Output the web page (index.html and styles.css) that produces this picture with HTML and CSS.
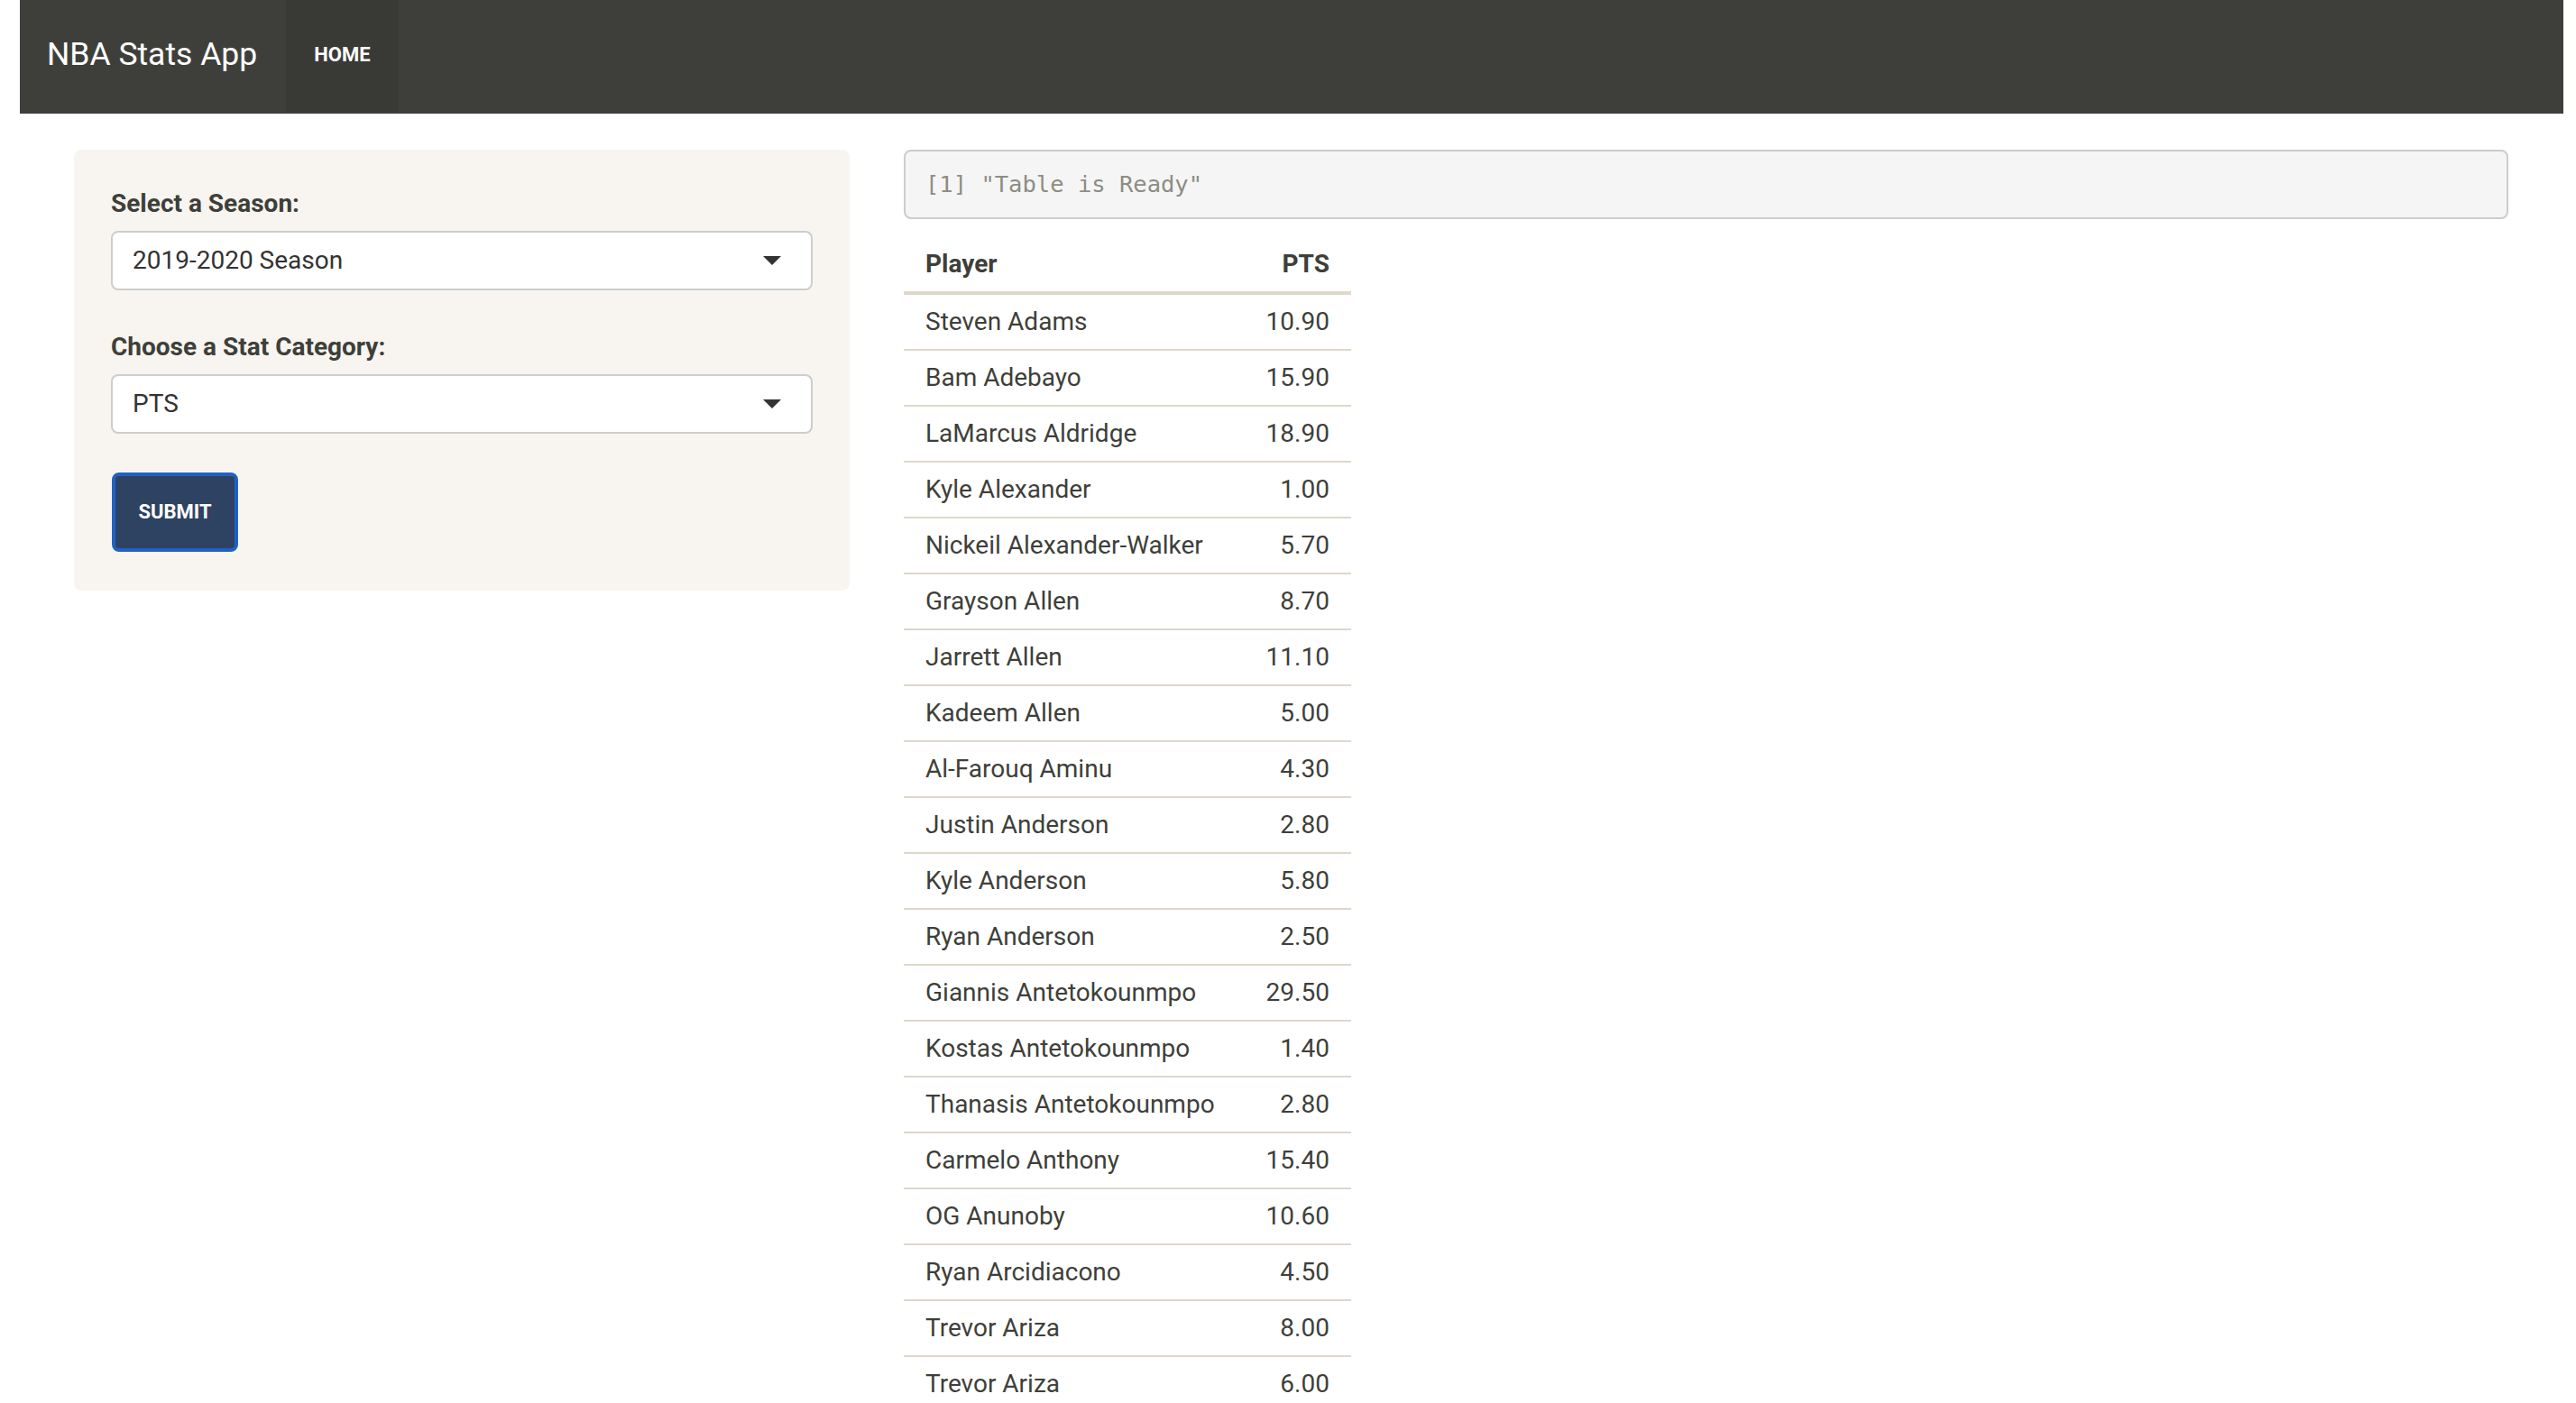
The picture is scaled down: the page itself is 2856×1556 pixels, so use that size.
FILE: index.html
```html
<!DOCTYPE html>
<html lang="en">
<head>
<meta charset="utf-8">
<title>NBA Stats App</title>
<link rel="stylesheet" href="styles.css">
</head>
<body>
<nav class="navbar">
  <span class="brand">NBA Stats App</span>
  <ul class="nav">
    <li class="nav-item active">HOME</li>
  </ul>
</nav>
<div class="container">
  <aside class="well">
    <div class="form-group">
      <label class="control-label">Select a Season:</label>
      <div class="select-box">
        <span class="select-value">2019-2020 Season</span>
        <svg class="caret" width="20" height="10" viewBox="0 0 20 10"><path d="M0 0 L20 0 L10 10 Z" fill="#333"/></svg>
      </div>
    </div>
    <div class="form-group">
      <label class="control-label">Choose a Stat Category:</label>
      <div class="select-box">
        <span class="select-value">PTS</span>
        <svg class="caret" width="20" height="10" viewBox="0 0 20 10"><path d="M0 0 L20 0 L10 10 Z" fill="#333"/></svg>
      </div>
    </div>
    <button class="btn-submit" type="button">SUBMIT</button>
  </aside>
  <main class="main">
    <pre class="output">[1] "Table is Ready"</pre>
    <table class="stats">
      <thead>
        <tr><th>Player</th><th class="num">PTS</th></tr>
      </thead>
      <tbody>
        <tr><td>Steven Adams</td><td class="num">10.90</td></tr>
        <tr><td>Bam Adebayo</td><td class="num">15.90</td></tr>
        <tr><td>LaMarcus Aldridge</td><td class="num">18.90</td></tr>
        <tr><td>Kyle Alexander</td><td class="num">1.00</td></tr>
        <tr><td>Nickeil Alexander-Walker</td><td class="num">5.70</td></tr>
        <tr><td>Grayson Allen</td><td class="num">8.70</td></tr>
        <tr><td>Jarrett Allen</td><td class="num">11.10</td></tr>
        <tr><td>Kadeem Allen</td><td class="num">5.00</td></tr>
        <tr><td>Al-Farouq Aminu</td><td class="num">4.30</td></tr>
        <tr><td>Justin Anderson</td><td class="num">2.80</td></tr>
        <tr><td>Kyle Anderson</td><td class="num">5.80</td></tr>
        <tr><td>Ryan Anderson</td><td class="num">2.50</td></tr>
        <tr><td>Giannis Antetokounmpo</td><td class="num">29.50</td></tr>
        <tr><td>Kostas Antetokounmpo</td><td class="num">1.40</td></tr>
        <tr><td>Thanasis Antetokounmpo</td><td class="num">2.80</td></tr>
        <tr><td>Carmelo Anthony</td><td class="num">15.40</td></tr>
        <tr><td>OG Anunoby</td><td class="num">10.60</td></tr>
        <tr><td>Ryan Arcidiacono</td><td class="num">4.50</td></tr>
        <tr><td>Trevor Ariza</td><td class="num">8.00</td></tr>
        <tr><td>Trevor Ariza</td><td class="num">6.00</td></tr>
      </tbody>
    </table>
  </main>
</div>
</body>
</html>
```

FILE: styles.css
```css
html, body {
  margin: 0;
  height: 100%;
  overflow: hidden;
  background: #ffffff;
}

body {
  padding: 0 14px 0 22px;
  font-family: Roboto, "Liberation Sans", sans-serif;
  font-size: 28px;
  line-height: 40px;
  color: #3e3f3a;
}

.navbar {
  display: flex;
  align-items: flex-start;
  height: 126px;
  background: #3e3f3a;
  margin-bottom: 40px;
}

.brand {
  display: flex;
  align-items: center;
  height: 126px;
  box-sizing: border-box;
  padding: 0 32px 6px 30px;
  font-size: 35.5px;
  color: #ffffff;
}

.nav {
  list-style: none;
  margin: 0;
  padding: 0;
  display: flex;
}

.nav-item {
  display: flex;
  align-items: center;
  height: 124px;
  box-sizing: border-box;
  padding: 0 31px 3px;
  font-size: 22px;
  font-weight: 700;
  color: #ffffff;
}

.nav-item.active {
  background: #393a35;
}

.container {
  display: flex;
  align-items: flex-start;
  gap: 60px;
  padding: 0 61px 0 60px;
}

.well {
  flex: 0 0 860px;
  box-sizing: border-box;
  padding: 40px 41px 42px;
  background: #f8f5f0;
  border-radius: 8px;
}

.form-group {
  margin-bottom: 43px;
}

.control-label {
  display: block;
  font-weight: 700;
  margin-bottom: 10px;
}

.select-box {
  display: flex;
  align-items: center;
  justify-content: space-between;
  height: 66px;
  box-sizing: border-box;
  padding: 0 33px 0 22px;
  border: 2px solid #cdcdcd;
  border-radius: 8px;
  background: #ffffff;
  color: #333333;
}

.caret {
  display: block;
}

.btn-submit {
  display: block;
  margin: 1px;
  width: 140px;
  height: 88px;
  padding: 0;
  border: 4px solid #2161c4;
  border-radius: 8px;
  box-shadow: 0 0 0 1px #ffffff;
  background: #2e4262;
  color: #ffffff;
  font-family: Roboto, "Liberation Sans", sans-serif;
  font-size: 22px;
  font-weight: 700;
  line-height: 40px;
}

.main {
  flex: 1;
  min-width: 0;
}

.output {
  margin: 0 0 20px;
  padding: 19px 22px;
  border: 2px solid #cccccc;
  border-radius: 8px;
  background: #f5f5f5;
  font-family: "DejaVu Sans Mono", "Liberation Mono", monospace;
  font-size: 25.5px;
  line-height: 35px;
  color: #8e8c84;
}

.stats {
  border-collapse: collapse;
  margin-top: 3px;
}

.stats th,
.stats td {
  padding: 10px 24px;
  text-align: left;
  white-space: nowrap;
}

.stats th:first-child,
.stats td:first-child {
  padding-right: 33px;
}

.stats th {
  font-weight: 700;
  border-bottom: 4px solid #dfd7ca;
}

.stats td {
  border-bottom: 2px solid #dfd7ca;
}

.stats .num {
  text-align: right;
}
```
